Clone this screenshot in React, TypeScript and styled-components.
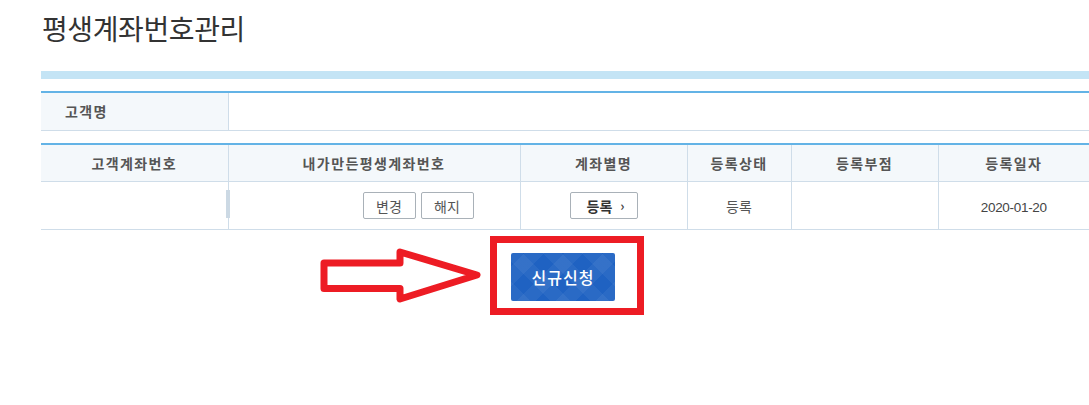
import React from "react";
import styled, {createGlobalStyle} from "styled-components";

const GlobalStyle = createGlobalStyle`
  html, body {
    margin: 0;
    padding: 0;
    background: #fff;
    overflow: hidden;
  }

  body {
    font-family: "Noto Sans CJK KR", "Noto Sans", sans-serif;
    color: #444;
  }
`;

const Page = styled.div`
  padding-left: 41px;
  width: 1048px;
`;

const Title = styled.h2`
  margin: 0;
  padding: 9px 0 0 1px;
  height: 62px;
  box-sizing: border-box;
  font-size: 28px;
  line-height: 38px;
  font-weight: 400;
  letter-spacing: -0.4px;
  color: #333;
`;

const TopBar = styled.div`
  height: 8px;
  background: #c4e4f5;
  margin-top: 9px;
`;

const Table = styled.table<{ $gap: number }>`
  width: 100%;
  margin-top: ${p => p.$gap}px;
  border-collapse: collapse;
  table-layout: fixed;
  border-top: 2px solid #63b3e6;
`;

const Th = styled.th<{ $left?: boolean }>`
  height: 38px;
  padding: 0 ${p => (p.$left ? "24px" : "0")};
  box-sizing: border-box;
  background: #f4f8fb;
  border-bottom: 1px solid #cfdde9;
  border-left: 1px solid #cfdde9;
  font-size: 14px;
  font-weight: 700;
  letter-spacing: 1.4px;
  color: #555;
  text-align: ${p => (p.$left ? "left" : "center")};

  &:first-child {
    border-left: none;
  }
`;

const Td = styled.td<{ $h?: number }>`
  position: relative;
  height: ${p => p.$h || 38}px;
  padding: 0;
  box-sizing: border-box;
  border-bottom: 1px solid #cfdde9;
  border-left: 1px solid #cfdde9;
  font-size: 14px;
  color: #555;
  text-align: center;

  &:first-child {
    border-left: none;
  }
`;

const EditCell = styled(Td)`
  &::before {
    content: "";
    position: absolute;
    left: -3px;
    top: 8px;
    width: 4px;
    height: 28px;
    background: #ccd9e4;
  }
`;

const DateText = styled.span`
  font-family: "Liberation Sans", Arial, sans-serif;
  font-size: 13.5px;
  letter-spacing: -0.3px;
  color: #444;
`;

const BtnGroup = styled.div`
  display: flex;
  justify-content: flex-end;
  gap: 5px;
  padding-right: 46px;
`;

const SmallBtn = styled.button<{ $bold?: boolean }>`
  height: 27px;
  min-width: 53px;
  padding: 0 10px;
  box-sizing: border-box;
  background: #fff;
  border: 1px solid #a9b1b8;
  border-radius: 2px;
  font-family: "Noto Sans CJK KR", sans-serif;
  font-size: 14px;
  font-weight: ${p => (p.$bold ? 700 : 400)};
  color: ${p => (p.$bold ? "#333" : "#555")};
  display: inline-flex;
  align-items: center;
  justify-content: center;
  gap: 8px;
  cursor: pointer;
`;

const WideBtn = styled(SmallBtn)`
  width: 68px;
  padding: 0 0 0 4px;
`;

const Chevron = styled.span`
  font-size: 13px;
  font-weight: 700;
  line-height: 1;
  color: #444;
`;

const ActionRow = styled.div`
  display: flex;
  align-items: center;
  gap: 4px;
  margin-top: 6px;
  padding-left: 275px;
`;

const Highlight = styled.div`
  border: 7px solid #ed1c24;
  padding: 10px 22px 7px 14px;
`;

const PrimaryBtn = styled.button`
  width: 104px;
  height: 48px;
  border: none;
  border-radius: 2px;
  background-color: #1f62c2;
  background-image:
    repeating-linear-gradient(45deg, rgba(255, 255, 255, 0.05) 0 14px, transparent 14px 28px),
    repeating-linear-gradient(-45deg, rgba(255, 255, 255, 0.05) 0 14px, transparent 14px 28px);
  font-family: "Noto Sans CJK KR", sans-serif;
  font-size: 16px;
  font-weight: 500;
  letter-spacing: 1px;
  color: #fff;
  cursor: pointer;
`;

const Arrow = () => (
    <svg width="170" height="62" viewBox="0 0 170 62">
        <polygon
            points="8,18 84,18 84,7 161,30 84,54 84,43.5 8,43.5"
            fill="#fff"
            stroke="#ed1c24"
            strokeWidth="7"
            strokeLinejoin="round"
        />
    </svg>
);

const App = () => {
    return (
        <Page>
            <GlobalStyle/>
            <Title>평생계좌번호관리</Title>
            <TopBar/>
            <Table $gap={12}>
                <colgroup>
                    <col style={{width: 187}}/>
                    <col/>
                </colgroup>
                <tbody>
                <tr>
                    <Th $left>고객명</Th>
                    <Td></Td>
                </tr>
                </tbody>
            </Table>
            <Table $gap={12}>
                <colgroup>
                    <col style={{width: 187}}/>
                    <col style={{width: 292}}/>
                    <col style={{width: 167}}/>
                    <col style={{width: 104}}/>
                    <col style={{width: 147}}/>
                    <col/>
                </colgroup>
                <thead>
                <tr>
                    <Th>고객계좌번호</Th>
                    <Th>내가만든평생계좌번호</Th>
                    <Th>계좌별명</Th>
                    <Th>등록상태</Th>
                    <Th>등록부점</Th>
                    <Th>등록일자</Th>
                </tr>
                </thead>
                <tbody>
                <tr>
                    <Td $h={48}></Td>
                    <EditCell $h={48}>
                        <BtnGroup>
                            <SmallBtn>변경</SmallBtn>
                            <SmallBtn>해지</SmallBtn>
                        </BtnGroup>
                    </EditCell>
                    <Td $h={48}>
                        <WideBtn $bold>등록 <Chevron>›</Chevron></WideBtn>
                    </Td>
                    <Td $h={48}>등록</Td>
                    <Td $h={48}></Td>
                    <Td $h={48}><DateText>2020-01-20</DateText></Td>
                </tr>
                </tbody>
            </Table>
            <ActionRow>
                <Arrow/>
                <Highlight>
                    <PrimaryBtn>신규신청</PrimaryBtn>
                </Highlight>
            </ActionRow>
        </Page>
    );
};

export default App;
